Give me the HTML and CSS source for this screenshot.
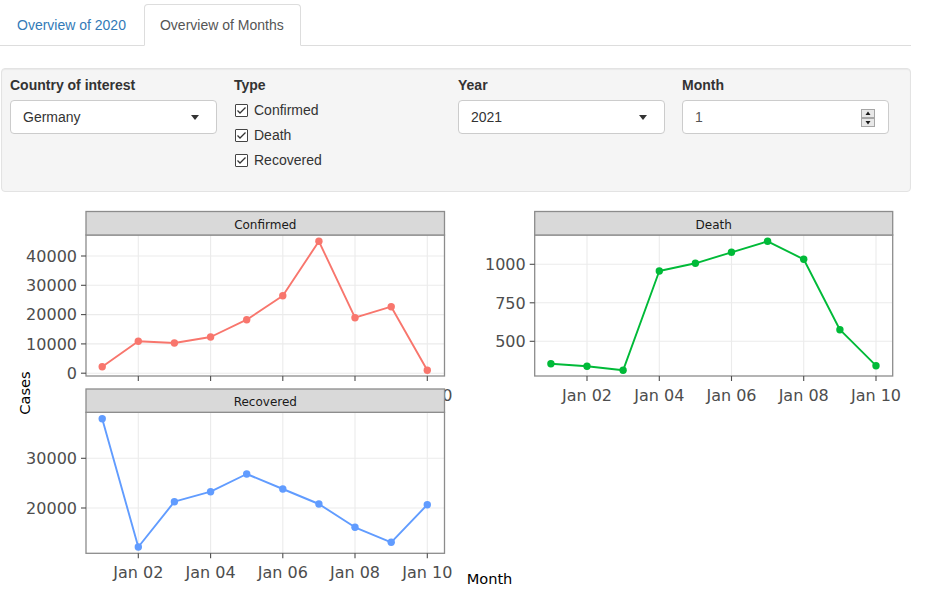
FILE: index.html
```html
<!DOCTYPE html>
<html lang="en">
<head>
<meta charset="utf-8">
<title>Overview of Months</title>
<link rel="stylesheet" href="styles.css">
</head>
<body>
<div class="app">
  <ul class="tabs">
    <li class="tab"><a>Overview of 2020</a></li>
    <li class="tab active"><a>Overview of Months</a></li>
  </ul>

  <div class="well">
    <div class="field">
      <label class="field-label">Country of interest</label>
      <div class="select"><span>Germany</span><span class="caret"></span></div>
    </div>
    <div class="field">
      <label class="field-label">Type</label>
      <div class="check"><span class="box"><svg width="13" height="13" viewBox="0 0 13 13"><polyline points="2.5,6.5 5,9 10.5,3.5" class="tick-path"/></svg></span>Confirmed</div>
      <div class="check"><span class="box"><svg width="13" height="13" viewBox="0 0 13 13"><polyline points="2.5,6.5 5,9 10.5,3.5" class="tick-path"/></svg></span>Death</div>
      <div class="check"><span class="box"><svg width="13" height="13" viewBox="0 0 13 13"><polyline points="2.5,6.5 5,9 10.5,3.5" class="tick-path"/></svg></span>Recovered</div>
    </div>
    <div class="field">
      <label class="field-label">Year</label>
      <div class="select"><span>2021</span><span class="caret"></span></div>
    </div>
    <div class="field">
      <label class="field-label">Month</label>
      <div class="select number"><span>1</span>
        <svg class="spin" width="14" height="18" viewBox="0 0 14 18">
          <rect x="0.5" y="0.5" width="13" height="8" class="spin-btn"/>
          <rect x="0.5" y="9.5" width="13" height="8" class="spin-btn"/>
          <polygon points="7,2.5 4.5,6 9.5,6" class="spin-arrow"/>
          <polygon points="7,15.5 4.5,12 9.5,12" class="spin-arrow"/>
        </svg>
      </div>
    </div>
  </div>

  <svg class="plot" width="925" height="421" viewBox="0 192 925 421">
    <!-- Confirmed -->
    <rect x="86" y="235" width="358.5" height="141" class="panel-bg"/>
    <g class="grid">
      <line x1="86" x2="444.5" y1="256" y2="256"/>
      <line x1="86" x2="444.5" y1="285.3" y2="285.3"/>
      <line x1="86" x2="444.5" y1="314.6" y2="314.6"/>
      <line x1="86" x2="444.5" y1="343.9" y2="343.9"/>
      <line x1="86" x2="444.5" y1="373.2" y2="373.2"/>
      <line x1="138.3" x2="138.3" y1="235" y2="376"/>
      <line x1="210.6" x2="210.6" y1="235" y2="376"/>
      <line x1="282.8" x2="282.8" y1="235" y2="376"/>
      <line x1="355" x2="355" y1="235" y2="376"/>
      <line x1="427.3" x2="427.3" y1="235" y2="376"/>
    </g>
    <polyline class="series confirmed" points="102.2,366.7 138.3,341.3 174.4,343 210.6,337 246.7,319.7 282.8,295.7 318.9,241.3 355,317.7 391.2,306.7 427.3,370.3"/>
    <g class="dots confirmed-dot">
      <circle cx="102.2" cy="366.7" r="3.7"/><circle cx="138.3" cy="341.3" r="3.7"/><circle cx="174.4" cy="343" r="3.7"/><circle cx="210.6" cy="337" r="3.7"/><circle cx="246.7" cy="319.7" r="3.7"/><circle cx="282.8" cy="295.7" r="3.7"/><circle cx="318.9" cy="241.3" r="3.7"/><circle cx="355" cy="317.7" r="3.7"/><circle cx="391.2" cy="306.7" r="3.7"/><circle cx="427.3" cy="370.3" r="3.7"/>
    </g>
    <rect x="86" y="235" width="358.5" height="141" class="frame"/>
    <rect x="86" y="211.5" width="358.5" height="23.5" class="strip"/>
    <text x="265.3" y="224.3" dy="0.36em" class="strip-label">Confirmed</text>
    <g class="ticks">
      <line x1="81" x2="86" y1="256" y2="256"/>
      <line x1="81" x2="86" y1="285.3" y2="285.3"/>
      <line x1="81" x2="86" y1="314.6" y2="314.6"/>
      <line x1="81" x2="86" y1="343.9" y2="343.9"/>
      <line x1="81" x2="86" y1="373.2" y2="373.2"/>
      <line x1="138.3" x2="138.3" y1="376" y2="381"/>
      <line x1="210.6" x2="210.6" y1="376" y2="381"/>
      <line x1="282.8" x2="282.8" y1="376" y2="381"/>
      <line x1="355" x2="355" y1="376" y2="381"/>
      <line x1="427.3" x2="427.3" y1="376" y2="381"/>
    </g>
    <g class="tick-label y-label">
      <text x="77" y="256" dy="0.36em">40000</text>
      <text x="77" y="285.3" dy="0.36em">30000</text>
      <text x="77" y="314.6" dy="0.36em">20000</text>
      <text x="77" y="343.9" dy="0.36em">10000</text>
      <text x="77" y="373.2" dy="0.36em">0</text>
    </g>
    <g class="tick-label x-label">
      <text x="427.3" y="395" dy="0.36em">Jan 10</text>
    </g>

    <!-- Death -->
    <rect x="534.7" y="235" width="358" height="141" class="panel-bg"/>
    <g class="grid">
      <line x1="534.7" x2="892.7" y1="264.3" y2="264.3"/>
      <line x1="534.7" x2="892.7" y1="302.8" y2="302.8"/>
      <line x1="534.7" x2="892.7" y1="341.3" y2="341.3"/>
      <line x1="587" x2="587" y1="235" y2="376"/>
      <line x1="659.3" x2="659.3" y1="235" y2="376"/>
      <line x1="731.5" x2="731.5" y1="235" y2="376"/>
      <line x1="803.7" x2="803.7" y1="235" y2="376"/>
      <line x1="876" x2="876" y1="235" y2="376"/>
    </g>
    <polyline class="series death" points="550.9,363.7 587,366.3 623.1,370.3 659.3,271 695.4,263.3 731.5,252.3 767.6,241.3 803.7,259.3 839.9,329.7 876,365.7"/>
    <g class="dots death-dot">
      <circle cx="550.9" cy="363.7" r="3.7"/><circle cx="587" cy="366.3" r="3.7"/><circle cx="623.1" cy="370.3" r="3.7"/><circle cx="659.3" cy="271" r="3.7"/><circle cx="695.4" cy="263.3" r="3.7"/><circle cx="731.5" cy="252.3" r="3.7"/><circle cx="767.6" cy="241.3" r="3.7"/><circle cx="803.7" cy="259.3" r="3.7"/><circle cx="839.9" cy="329.7" r="3.7"/><circle cx="876" cy="365.7" r="3.7"/>
    </g>
    <rect x="534.7" y="235" width="358" height="141" class="frame"/>
    <rect x="534.7" y="211.5" width="358" height="23.5" class="strip"/>
    <text x="713.7" y="224.3" dy="0.36em" class="strip-label">Death</text>
    <g class="ticks">
      <line x1="529.7" x2="534.7" y1="264.3" y2="264.3"/>
      <line x1="529.7" x2="534.7" y1="302.8" y2="302.8"/>
      <line x1="529.7" x2="534.7" y1="341.3" y2="341.3"/>
      <line x1="587" x2="587" y1="376" y2="381"/>
      <line x1="659.3" x2="659.3" y1="376" y2="381"/>
      <line x1="731.5" x2="731.5" y1="376" y2="381"/>
      <line x1="803.7" x2="803.7" y1="376" y2="381"/>
      <line x1="876" x2="876" y1="376" y2="381"/>
    </g>
    <g class="tick-label y-label">
      <text x="525.7" y="264.3" dy="0.36em">1000</text>
      <text x="525.7" y="302.8" dy="0.36em">750</text>
      <text x="525.7" y="341.3" dy="0.36em">500</text>
    </g>
    <g class="tick-label x-label">
      <text x="587" y="395" dy="0.36em">Jan 02</text>
      <text x="659.3" y="395" dy="0.36em">Jan 04</text>
      <text x="731.5" y="395" dy="0.36em">Jan 06</text>
      <text x="803.7" y="395" dy="0.36em">Jan 08</text>
      <text x="876" y="395" dy="0.36em">Jan 10</text>
    </g>

    <!-- Recovered -->
    <rect x="86" y="412.3" width="358.5" height="141" class="panel-bg"/>
    <g class="grid">
      <line x1="86" x2="444.5" y1="458.3" y2="458.3"/>
      <line x1="86" x2="444.5" y1="508" y2="508"/>
      <line x1="138.3" x2="138.3" y1="412.3" y2="553.3"/>
      <line x1="210.6" x2="210.6" y1="412.3" y2="553.3"/>
      <line x1="282.8" x2="282.8" y1="412.3" y2="553.3"/>
      <line x1="355" x2="355" y1="412.3" y2="553.3"/>
      <line x1="427.3" x2="427.3" y1="412.3" y2="553.3"/>
    </g>
    <polyline class="series recovered" points="102.2,418.7 138.3,547 174.4,501.7 210.6,491.7 246.7,474 282.8,489 318.9,504 355,527.3 391.2,542.3 427.3,504.7"/>
    <g class="dots recovered-dot">
      <circle cx="102.2" cy="418.7" r="3.7"/><circle cx="138.3" cy="547" r="3.7"/><circle cx="174.4" cy="501.7" r="3.7"/><circle cx="210.6" cy="491.7" r="3.7"/><circle cx="246.7" cy="474" r="3.7"/><circle cx="282.8" cy="489" r="3.7"/><circle cx="318.9" cy="504" r="3.7"/><circle cx="355" cy="527.3" r="3.7"/><circle cx="391.2" cy="542.3" r="3.7"/><circle cx="427.3" cy="504.7" r="3.7"/>
    </g>
    <rect x="86" y="412.3" width="358.5" height="141" class="frame"/>
    <rect x="86" y="389" width="358.5" height="23.3" class="strip"/>
    <text x="265.3" y="401.7" dy="0.36em" class="strip-label">Recovered</text>
    <g class="ticks">
      <line x1="81" x2="86" y1="458.3" y2="458.3"/>
      <line x1="81" x2="86" y1="508" y2="508"/>
      <line x1="138.3" x2="138.3" y1="553.3" y2="558.3"/>
      <line x1="210.6" x2="210.6" y1="553.3" y2="558.3"/>
      <line x1="282.8" x2="282.8" y1="553.3" y2="558.3"/>
      <line x1="355" x2="355" y1="553.3" y2="558.3"/>
      <line x1="427.3" x2="427.3" y1="553.3" y2="558.3"/>
    </g>
    <g class="tick-label y-label">
      <text x="77" y="458.3" dy="0.36em">30000</text>
      <text x="77" y="508" dy="0.36em">20000</text>
    </g>
    <g class="tick-label x-label">
      <text x="138.3" y="572.7" dy="0.36em">Jan 02</text>
      <text x="210.6" y="572.7" dy="0.36em">Jan 04</text>
      <text x="282.8" y="572.7" dy="0.36em">Jan 06</text>
      <text x="355" y="572.7" dy="0.36em">Jan 08</text>
      <text x="427.3" y="572.7" dy="0.36em">Jan 10</text>
    </g>

    <text x="24.5" y="393" dy="0.36em" transform="rotate(-90 24.5 393)" class="axis-title">Cases</text>
    <text x="489.5" y="579" dy="0.36em" class="axis-title">Month</text>
  </svg>
</div>
</body>
</html>
```

FILE: styles.css
```css
html, body {
  margin: 0;
  padding: 0;
  background: #ffffff;
}

body {
  font-family: "Liberation Sans", Arial, sans-serif;
  font-size: 14px;
  line-height: 20px;
  color: #333333;
}

.app {
  width: 911px;
}

/* Tabs */
.tabs {
  display: flex;
  margin: 4px 0 0 0;
  padding: 0 0 0 1px;
  list-style: none;
  border-bottom: 1px solid #dddddd;
}

.tab {
  margin-right: 2px;
  margin-bottom: -1px;
}

.tab a {
  display: block;
  padding: 10px 15px;
  line-height: 20px;
  border: 1px solid transparent;
  border-radius: 4px 4px 0 0;
  color: #337ab7;
  cursor: pointer;
}

.tab.active a {
  color: #555555;
  background: #ffffff;
  border-color: #dddddd #dddddd transparent;
  padding-right: 16px;
}

/* Input well */
.well {
  box-sizing: border-box;
  margin: 22px 0 0 1px;
  width: 910px;
  height: 124px;
  padding: 6px 8px;
  background: #f5f5f5;
  border: 1px solid #e3e3e3;
  border-radius: 4px;
  box-shadow: inset 0 1px 1px rgba(0, 0, 0, 0.05);
  display: grid;
  grid-template-columns: repeat(4, 207px);
  column-gap: 17px;
  align-items: start;
}

.field-label {
  display: block;
  font-weight: bold;
  margin-bottom: 5px;
  color: #333333;
}

.select {
  box-sizing: border-box;
  height: 34px;
  display: flex;
  align-items: center;
  justify-content: space-between;
  padding: 0 17px 0 12px;
  background: #ffffff;
  border: 1px solid #cccccc;
  border-radius: 4px;
  color: #333333;
}

.caret {
  width: 0;
  height: 0;
  border-left: 4.5px solid transparent;
  border-right: 4.5px solid transparent;
  border-top: 5px solid #333333;
  margin-top: 1px;
}

.select.number {
  color: #555555;
  padding-right: 13px;
}

.spin {
  display: block;
  margin-top: 1px;
}

.spin-btn {
  fill: #e8e8e8;
  stroke: #a6a6a6;
  stroke-width: 1;
}

.spin-arrow {
  fill: #1a1a1a;
}

.check {
  display: flex;
  align-items: center;
  height: 20px;
  margin-bottom: 5px;
  color: #333333;
}

.box {
  display: block;
  box-sizing: border-box;
  width: 13px;
  height: 13px;
  margin-left: 1px;
  margin-right: 6px;
  background: #ffffff;
  border: 1px solid #444444;
  border-radius: 1px;
}

.box svg {
  display: block;
  margin: -1px 0 0 -1px;
}

.tick-path {
  fill: none;
  stroke: #333333;
  stroke-width: 1.3;
}

/* Plot */
.plot {
  display: block;
  font-family: "DejaVu Sans", Verdana, sans-serif;
}

.panel-bg {
  fill: #ffffff;
}

.grid line {
  stroke: #ebebeb;
  stroke-width: 1.1;
}

.frame {
  fill: none;
  stroke: #8c8c8c;
  stroke-width: 1.3;
}

.strip {
  fill: #d9d9d9;
  stroke: #8c8c8c;
  stroke-width: 1.3;
}

.strip-label {
  font-size: 12px;
  fill: #1a1a1a;
  text-anchor: middle;
}

.ticks line {
  stroke: #4d4d4d;
  stroke-width: 1.1;
}

.tick-label {
  font-size: 16px;
  fill: #4d4d4d;
}

.y-label {
  text-anchor: end;
}

.x-label {
  text-anchor: middle;
}

.axis-title {
  font-size: 14.6px;
  fill: #000000;
  text-anchor: middle;
}

.series {
  fill: none;
  stroke-width: 1.9;
  stroke-linejoin: round;
}

.confirmed { stroke: #F8766D; }
.death { stroke: #00BA38; }
.recovered { stroke: #619CFF; }

.confirmed-dot circle { fill: #F8766D; }
.death-dot circle { fill: #00BA38; }
.recovered-dot circle { fill: #619CFF; }
```
